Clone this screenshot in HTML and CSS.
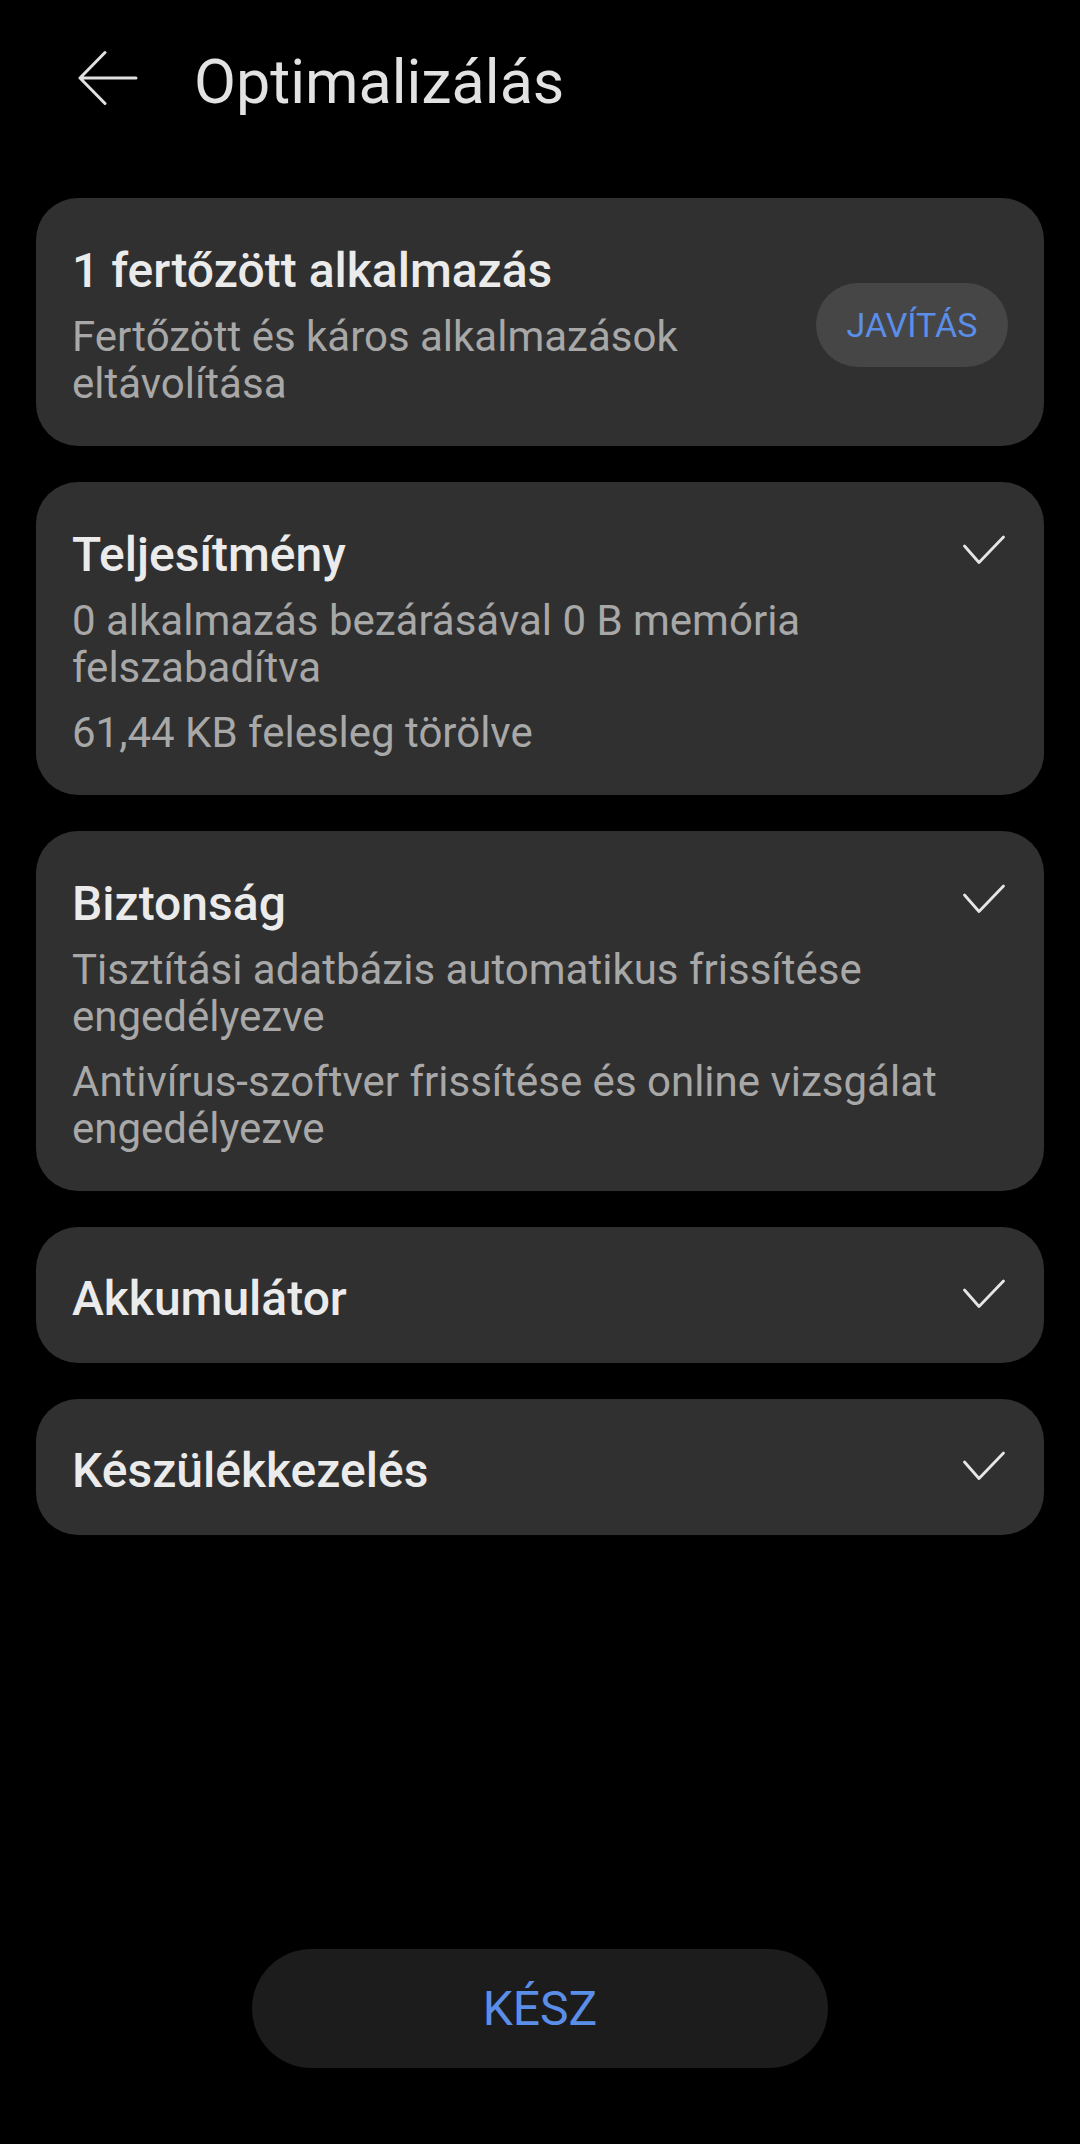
FILE: index.html
```html
<!DOCTYPE html>
<html lang="hu">
<head>
<meta charset="utf-8">
<title>Optimalizálás</title>
<link rel="stylesheet" href="styles.css">
</head>
<body>
<div class="page">
  <header class="topbar">
    <svg class="back" width="60" height="56" viewBox="0 0 60 56" aria-hidden="true">
      <path d="M2 28 H58 M2 28 L27 2.5 M2 28 L27 53.5" fill="none" stroke="#e0e0e0" stroke-width="3" stroke-linecap="round" stroke-linejoin="round"/>
    </svg>
    <h1 class="title">Optimalizálás</h1>
  </header>

  <main class="list">
    <section class="card card-action">
      <div class="text">
        <div class="card-title">1 fertőzött alkalmazás</div>
        <p class="sub">Fertőzött és káros alkalmazások eltávolítása</p>
      </div>
      <button class="fix">JAVÍTÁS</button>
    </section>

    <section class="card">
      <div class="text">
        <div class="card-title">Teljesítmény</div>
        <p class="sub">0 alkalmazás bezárásával 0 B memória felszabadítva</p>
        <p class="sub">61,44 KB felesleg törölve</p>
      </div>
      <svg class="check" width="44" height="56" viewBox="0 0 44 56" aria-hidden="true"><path d="M2.5 19 L17 35.5 L41.5 10" fill="none" stroke="#e6e6e6" stroke-width="2.8" stroke-linecap="round" stroke-linejoin="round"/></svg>
    </section>

    <section class="card">
      <div class="text">
        <div class="card-title">Biztonság</div>
        <p class="sub">Tisztítási adatbázis automatikus frissítése engedélyezve</p>
        <p class="sub">Antivírus-szoftver frissítése és online vizsgálat engedélyezve</p>
      </div>
      <svg class="check" width="44" height="56" viewBox="0 0 44 56" aria-hidden="true"><path d="M2.5 19 L17 35.5 L41.5 10" fill="none" stroke="#e6e6e6" stroke-width="2.8" stroke-linecap="round" stroke-linejoin="round"/></svg>
    </section>

    <section class="card card-single">
      <div class="text">
        <div class="card-title">Akkumulátor</div>
      </div>
      <svg class="check" width="44" height="56" viewBox="0 0 44 56" aria-hidden="true"><path d="M2.5 19 L17 35.5 L41.5 10" fill="none" stroke="#e6e6e6" stroke-width="2.8" stroke-linecap="round" stroke-linejoin="round"/></svg>
    </section>

    <section class="card card-single">
      <div class="text">
        <div class="card-title">Készülékkezelés</div>
      </div>
      <svg class="check" width="44" height="56" viewBox="0 0 44 56" aria-hidden="true"><path d="M2.5 19 L17 35.5 L41.5 10" fill="none" stroke="#e6e6e6" stroke-width="2.8" stroke-linecap="round" stroke-linejoin="round"/></svg>
    </section>
  </main>

  <footer class="footer">
    <button class="done">KÉSZ</button>
  </footer>
</div>
</body>
</html>
```

FILE: styles.css
```css
* { box-sizing: border-box; }

html, body {
  margin: 0;
  padding: 0;
  background: #000;
}

body {
  font-family: Roboto, "Noto Sans", "Liberation Sans", sans-serif;
  color: #e8e8e8;
}

.page {
  min-height: 2144px;
  display: flex;
  flex-direction: column;
}

.topbar {
  display: flex;
  align-items: flex-start;
  padding: 42px 0 0 78px;
  gap: 56px;
}

.back {
  margin-top: 8px;
  flex: none;
}

.title {
  margin: 0;
  font-size: 61px;
  line-height: 80px;
  font-weight: 400;
  color: #e2e2e2;
}

.list {
  display: flex;
  flex-direction: column;
  gap: 36px;
  padding: 76px 36px 0 36px;
}

.card {
  background: #303030;
  border-radius: 42px;
  display: flex;
  align-items: flex-start;
  gap: 4px;
  padding: 45px 38px 39px 36px;
}

.card-action {
  align-items: center;
  gap: 24px;
  padding-right: 36px;
}

.card-single {
  padding-top: 44px;
  padding-bottom: 36px;
}

.text {
  flex: 1;
  min-width: 0;
}

.card-title {
  font-size: 48px;
  line-height: 56px;
  font-weight: 500;
  color: #ebebeb;
}

.sub {
  margin: 18px 0 0 0;
  font-size: 42px;
  line-height: 47px;
  color: #a8a8a8;
}

.card-title + .sub {
  margin-top: 14px;
}

.check {
  flex: none;
}

.fix {
  flex: none;
  width: 192px;
  height: 84px;
  border: none;
  border-radius: 42px;
  background: #464646;
  color: #5b8ee9;
  font-family: inherit;
  font-size: 34px;
  font-weight: 400;
  padding: 0;
}

.footer {
  margin-top: auto;
  display: flex;
  justify-content: center;
  padding-bottom: 76px;
}

.done {
  width: 576px;
  height: 119px;
  border: none;
  border-radius: 60px;
  background: #1c1c1c;
  color: #5b8ee9;
  font-family: inherit;
  font-size: 48px;
  font-weight: 400;
  padding: 0;
}
```
